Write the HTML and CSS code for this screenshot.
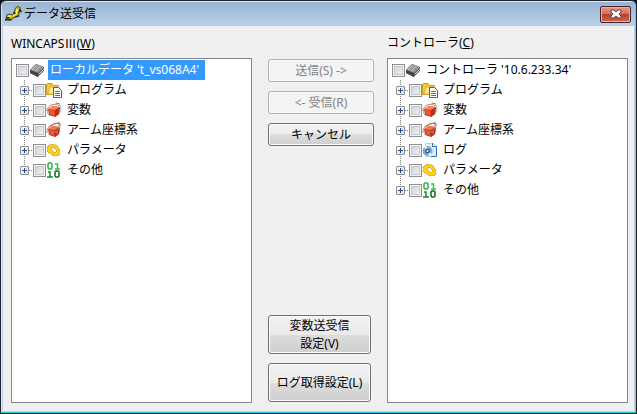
FILE: index.html
```html
<!DOCTYPE html>
<html lang="ja">

<head>
    <meta charset="UTF-8">
    <meta name="viewport" content="width=device-width, initial-scale=1.0">
    <title>データ送受信</title>
    <link rel="stylesheet" href="styles.css">
</head>

<body>

<!-- shared icons -->
<svg class="defs" aria-hidden="true">
    <symbol id="device" viewBox="0 0 16 16">
        <path d="M1 8L7 2L15 5V9L9 15L1 11Z" fill="#555"/>
        <path d="M1 8L7 2L15 5L9 11Z" fill="#999"/>
        <path d="M3 8L8 3M6 9L11 4" stroke="#c4c4c4"/>
        <path d="M1 8L9 11V15L1 11Z" fill="#444"/>
        <path d="M10 12L15 7M10 14L15 9" stroke="#ddd"/>
    </symbol>
    <symbol id="program" viewBox="0 0 16 16">
        <path d="M0.500 12.500V2.500L1.500 1.500H6L7 3.500H12.500V12.500Z" fill="#f4c63c" stroke="#c99a22"/>
        <path d="M2 12L4 5H13V12H2Z" fill="#ffe992" stroke="#e2b53a"/>
        <path d="M7.500 5.500H12.500L15.500 8.500V15.500H7.500Z" fill="#fff" stroke="#3565ad"/>
        <path d="M9 9.500H14M9 11.500H14M9 13.500H14" stroke="#3f72bd"/>
    </symbol>
    <symbol id="variable" viewBox="0 0 16 16">
        <path d="M2 7L7 4L14 5L13 12L9 15L3 13Z" fill="#e03c1c"/>
        <path d="M2 7L7 4L14 5L9 8Z" fill="#f58a66"/>
        <path d="M9 8L14 5L13 12L9 15Z" fill="#bd2c14"/>
        <path d="M5 8V12M7 9V13" stroke="#f3774f"/>
        <path d="M1 9C1 5 5 2 12 2M10 1L14 2L12 4" fill="none" stroke="#b96a52"/>
        <path d="M13 2C16 5 15 10 13 12M1 7L2 12L4 14" fill="none" stroke="#9bb0bd"/>
    </symbol>
    <symbol id="arm" viewBox="0 0 16 16">
        <path d="M2 7L7 4L14 5L13 12L9 15L3 13Z" fill="#e03c1c"/>
        <path d="M2 7L7 4L14 5L9 8Z" fill="#f47753"/>
        <path d="M9 8L14 5L13 12L9 15Z" fill="#bd2c14"/>
        <path d="M5 8V12M7 9V13M11 9V12" stroke="#f3774f"/>
        <path d="M1 11C0 5 6 1 14 1C15 6 11 10 4 12" fill="none" stroke="#7894a7"/>
        <path d="M3 5L8 2L13 1V4" fill="none" stroke="#c95a3c"/>
    </symbol>
    <symbol id="log" viewBox="0 0 16 16">
        <path d="M3.500 1.500H11L14.500 4V14.500H3.500Z" fill="#dceaff" stroke="#b9cfec"/>
        <path d="M10.500 1V4.500H14M14.500 4V14.500H9" fill="none" stroke="#376cae"/>
        <circle cx="5.500" cy="9" r="5" fill="#86a9cf"/>
        <path d="M5 9L2 5L5 4ZM6 9L10 12L7 14Z" fill="#e4f2ff"/>
        <circle cx="5.500" cy="9" r="2.500" fill="#28659b"/>
        <circle cx="5.500" cy="9" r="1" fill="#fff"/>
    </symbol>
    <symbol id="gear" viewBox="0 0 16 16">
        <path fill-rule="evenodd" d="M3 3L5 3L6 2L8 3L10 3L12 5L12 6L14 8L13 10L14 12L12 14L10 13L8 14L6 13L5 11L3 11L1 9L2 7L1 5L3 4ZM6 5L5 7L7 10L9 11L11 9L9 6Z" fill="#ffd51c" stroke="#e3a90a"/>
    </symbol>
    <symbol id="binary" viewBox="0 0 16 16">
        <g fill="none" stroke-width="1.500">
            <path d="M3 1H5L6 2V6L5 7H3L2 6V2Z" stroke="#22b63d"/>
            <path d="M9 2H11.500V7M9 7H14" stroke="#2bc545"/>
            <path d="M2 10H4V15M1 15H7" stroke="#168c2b"/>
            <path d="M10 9H12L13 10V14L12 15H10L9 14V10Z" stroke="#12651f"/>
        </g>
    </symbol>
</svg>

<div class="window">
    <header class="titlebar">
        <svg class="app-icon" viewBox="0 0 18 16" aria-hidden="true">
            <path d="M1 13L2 9L5 8L8 9L10 6L11 2L13 0L16 1V4L14 6L15 9L12 11L9 12L6 14Z" fill="#c9bd2a" stroke="#3c3a16"/>
            <path d="M3 11L6 10M9 10L12 7L13 3" fill="none" stroke="#fff45c" stroke-width="2"/>
            <path d="M0 14H7M2 12H5M11 11L15 10M15 3L17 5L15 6M9 6L11 8" fill="none" stroke="#222" stroke-width="1.500"/>
        </svg>
        <h1>データ送受信</h1>
        <button type="button" class="close" aria-label="閉じる">
            <svg viewBox="0 0 12 10" aria-hidden="true">
                <path d="M1 1H4L6 3L8 1H11V3L9 5L11 7V9H8L6 7L4 9H1V7L3 5L1 3Z" fill="#fff" stroke="#5a4246"/>
            </svg>
        </button>
    </header>

    <main class="content">
        <section class="side">
            <h2>WINCAPS<span class="wide">Ⅲ</span>(<u>W</u>)</h2>
            <div class="tree">
                <div class="root">
                    <input type="checkbox" id="local">
                    <svg class="icon"><use href="#device"/></svg>
                    <label for="local" class="selected">ローカルデータ 't_vs068A4'</label>
                </div>
                <ul>
                    <li><button type="button" class="expand" aria-label="展開"></button><input type="checkbox" id="l1"><svg class="icon"><use href="#program"/></svg><label for="l1">プログラム</label></li>
                    <li><button type="button" class="expand" aria-label="展開"></button><input type="checkbox" id="l2"><svg class="icon"><use href="#variable"/></svg><label for="l2">変数</label></li>
                    <li><button type="button" class="expand" aria-label="展開"></button><input type="checkbox" id="l3"><svg class="icon"><use href="#arm"/></svg><label for="l3">アーム座標系</label></li>
                    <li><button type="button" class="expand" aria-label="展開"></button><input type="checkbox" id="l4"><svg class="icon"><use href="#gear"/></svg><label for="l4">パラメータ</label></li>
                    <li><button type="button" class="expand" aria-label="展開"></button><input type="checkbox" id="l5"><svg class="icon"><use href="#binary"/></svg><label for="l5">その他</label></li>
                </ul>
            </div>
        </section>

        <div class="actions">
            <div class="group">
                <button type="button" class="btn" disabled>送信(S) -&gt;</button>
                <button type="button" class="btn" disabled>&lt;- 受信(R)</button>
                <button type="button" class="btn">キャンセル</button>
            </div>
            <div class="group settings">
                <button type="button" class="btn">変数送受信<br>設定(V)</button>
                <button type="button" class="btn">ログ取得設定(L)</button>
            </div>
        </div>

        <section class="side">
            <h2>コントローラ(<u>C</u>)</h2>
            <div class="tree">
                <div class="root">
                    <input type="checkbox" id="controller">
                    <svg class="icon"><use href="#device"/></svg>
                    <label for="controller">コントローラ '10.6.233.34'</label>
                </div>
                <ul>
                    <li><button type="button" class="expand" aria-label="展開"></button><input type="checkbox" id="c1"><svg class="icon"><use href="#program"/></svg><label for="c1">プログラム</label></li>
                    <li><button type="button" class="expand" aria-label="展開"></button><input type="checkbox" id="c2"><svg class="icon"><use href="#variable"/></svg><label for="c2">変数</label></li>
                    <li><button type="button" class="expand" aria-label="展開"></button><input type="checkbox" id="c3"><svg class="icon"><use href="#arm"/></svg><label for="c3">アーム座標系</label></li>
                    <li><button type="button" class="expand" aria-label="展開"></button><input type="checkbox" id="c4"><svg class="icon"><use href="#log"/></svg><label for="c4">ログ</label></li>
                    <li><button type="button" class="expand" aria-label="展開"></button><input type="checkbox" id="c5"><svg class="icon"><use href="#gear"/></svg><label for="c5">パラメータ</label></li>
                    <li><button type="button" class="expand" aria-label="展開"></button><input type="checkbox" id="c6"><svg class="icon"><use href="#binary"/></svg><label for="c6">その他</label></li>
                </ul>
            </div>
        </section>
    </main>
</div>

</body>
</html>
```
FILE: styles.css
```css
* {
    box-sizing: border-box;
}

body {
    margin: 0;
    background: #101018;
    font-family: "Noto Sans", "Noto Sans CJK JP", sans-serif;
    font-size: 12px;
    line-height: 16px;
    color: #000;
}

button {
    font: inherit;
    color: inherit;
    padding: 0;
}

.defs {
    display: none;
}

.window {
    display: flex;
    flex-direction: column;
    height: 100vh;
    border: 1px solid #20242c;
    border-radius: 6px 6px 0 0;
    background: #b9d1ea;
    padding: 0 2px 2px;
    box-shadow: inset 0 -1px #25cbe5, inset 1px 1px #dce8f5, inset -1px 0 #4ed4ee;
    overflow: hidden;
}

.titlebar {
    display: flex;
    align-items: center;
    flex: none;
    height: 24px;
    margin: 1px -1px 0;
    padding: 0 4px 0 3px;
    background: linear-gradient(#99b4d1, #b9d1ea);
}

.app-icon {
    width: 17px;
    height: 16px;
    margin-right: 2px;
}

h1, h2 {
    margin: 0;
    font-size: 12px;
    font-weight: normal;
}

.wide {
    font-family: "Noto Sans CJK JP", sans-serif;
}

.close {
    display: flex;
    align-items: center;
    justify-content: center;
    width: 31px;
    height: 17px;
    margin-left: auto;
    border: 1px solid #4b2028;
    border-radius: 2px;
    background: linear-gradient(#df9c90, #cc6b5b 50%, #b93f2d 50%, #cf6857);
    box-shadow: inset 0 0 0 1px #e5b2a8;
}

.close svg {
    width: 12px;
    height: 10px;
}

.content {
    flex: 1;
    display: grid;
    grid-template-columns: 1fr 135px 1fr;
    padding: 9px 6px 8px 8px;
    background: #f0f0f0;
}

.side {
    display: flex;
    flex-direction: column;
}

.side h2 {
    height: 23px;
}

.tree {
    flex: 1;
    padding: 1px 4px;
    border: 1px solid #828790;
    background: #fff;
}

.root, .tree li {
    display: flex;
    align-items: center;
    height: 20px;
}

.tree ul {
    list-style: none;
    margin: 0;
    padding: 0 0 0 4px;
}

.tree li {
    background:
        repeating-linear-gradient(#808080 0 1px, transparent 1px 2px) 4px 0 / 1px 100% no-repeat,
        repeating-linear-gradient(90deg, #808080 0 1px, transparent 1px 2px) 9px 10px / 4px 1px no-repeat;
}

.tree li:last-child {
    background-size: 1px 10px, 4px 1px;
}

.tree input {
    appearance: none;
    flex: none;
    width: 13px;
    height: 13px;
    margin: 0;
    border: 1px solid #8e8f8f;
    background: linear-gradient(135deg, #cdd0d5, #f6f6f6);
    box-shadow: inset 0 0 0 1px #f4f4f4, inset 0 0 0 2px #c5c9cf;
}

.tree input:checked {
    background: #4b6097;
}

.icon {
    flex: none;
    width: 16px;
    height: 16px;
}

.tree label {
    padding: 2px;
    margin-left: 3px;
    white-space: nowrap;
}

.tree .selected {
    padding-right: 6px;
    background: #3399ff;
    color: #fff;
}

.expand {
    flex: none;
    width: 9px;
    height: 9px;
    margin-right: 4px;
    border: 1px solid #919191;
    border-radius: 1px;
    background:
        linear-gradient(#28479a, #28479a) center / 5px 1px no-repeat,
        linear-gradient(#28479a, #28479a) center / 1px 5px no-repeat,
        linear-gradient(135deg, #fff, #dedede);
}

.actions {
    display: flex;
    flex-direction: column;
    justify-content: space-between;
    padding: 24px 13px 1px 16px;
}

.group {
    display: flex;
    flex-direction: column;
    gap: 9px;
}

.btn {
    height: 23px;
    border: 1px solid #707070;
    border-radius: 3px;
    background: linear-gradient(#f2f2f2, #ebebeb 50%, #dddddd 50%, #cfcfcf);
    box-shadow: inset 0 0 0 1px #fafafa;
    white-space: nowrap;
}

.btn:disabled {
    border-color: #adb2b5;
    background: #f4f4f4;
    color: #838383;
}

.settings {
    padding-right: 3px;
}

.settings .btn {
    height: 39px;
    line-height: 18px;
}
```
